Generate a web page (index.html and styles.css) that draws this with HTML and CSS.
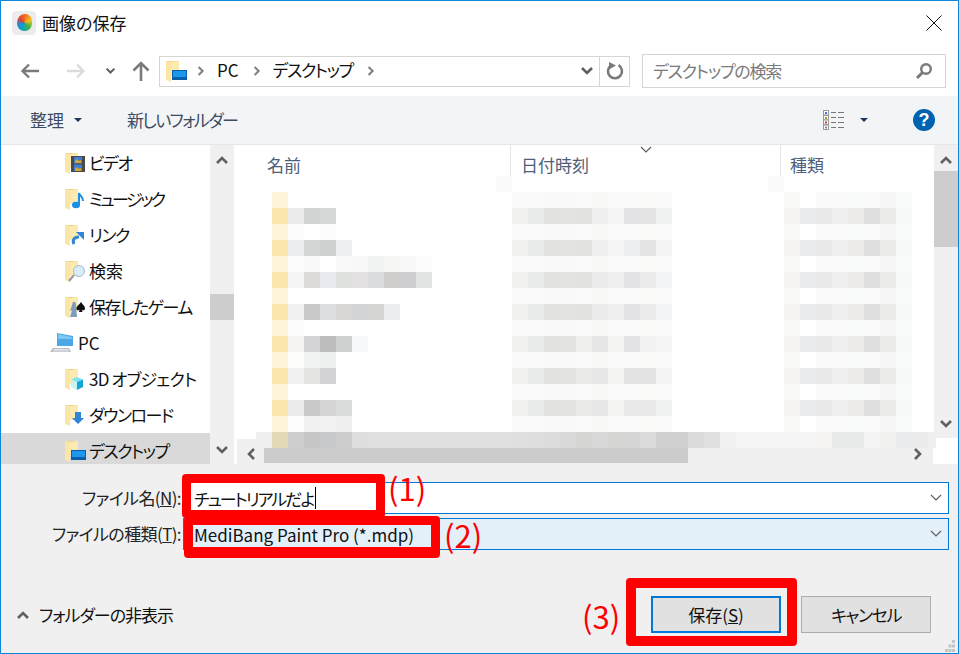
FILE: index.html
```html
<!doctype html>
<html lang="ja">
<head>
  <meta charset="utf8">
  <title>画像の保存</title>
  <link rel="stylesheet" href="styles.css">
</head>
<body>
  <!-- shared icon parts -->
  <svg class="defs" aria-hidden="true">
    <symbol id="folder" viewBox="0 0 22 24">
      <polygon points="0,2 13,2 13,17 0,17" fill="#f3cf7c"/>
      <polygon points="0,2 5,3 5,23 0,21" fill="#fbe6a6"/>
      <polygon points="5,3 13,2 13,17 5,17" fill="#fdeab0"/>
    </symbol>
    <symbol id="desktop" viewBox="0 0 22 24">
      <rect x="6.5" y="11.5" width="14" height="9" fill="#1f96ee" stroke="#0b5ea8"/>
      <rect x="7" y="18" width="13" height="2" fill="#0b5ea8"/>
    </symbol>
    <symbol id="chev-up" viewBox="0 0 14 10">
      <polyline points="2,8 7,3 12,8" fill="none" stroke="#606060" stroke-width="2.6"/>
    </symbol>
    <symbol id="chev-down" viewBox="0 0 14 10">
      <polyline points="2,2 7,7 12,2" fill="none" stroke="#606060" stroke-width="2.6"/>
    </symbol>
    <symbol id="chev-right" viewBox="0 0 10 14">
      <polyline points="2,2 7,7 2,12" fill="none" stroke="#808080" stroke-width="2.6"/>
    </symbol>
    <symbol id="thin-down" viewBox="0 0 12 8">
      <polyline points="1,1 6,6 11,1" fill="none" stroke="#5a5a5a" stroke-width="1.1"/>
    </symbol>
  </svg>

  <div class="window">
    <div class="titlebar">
      <span class="logo"><span class="logo-ball"></span></span>
      <span class="title">画像の保存</span>
      <svg class="close" width="16" height="16" viewBox="0 0 16 16">
        <path d="M.5.5l15 15M15.500.5l-15 15" stroke="#111" fill="none"/>
      </svg>
    </div>

    <div class="navbar">
      <svg class="nav-back" width="20" height="16" viewBox="0 0 20 16">
        <path d="M19 8H3M9 1.500L2.500 8 9 14.500" stroke="#7a7a7a" stroke-width="2.4" fill="none"/>
      </svg>
      <svg class="nav-forward" width="20" height="16" viewBox="0 0 20 16">
        <path d="M1 8h16M11 1.500L17.500 8 11 14.500" stroke="#dcdcdc" stroke-width="2.4" fill="none"/>
      </svg>
      <svg class="nav-recent" width="11" height="8"><use href="#chev-down"/></svg>
      <svg class="nav-up" width="18" height="20" viewBox="0 0 18 20">
        <path d="M9 20V3M1.500 9.500L9 2l7.500 7.500" stroke="#7a7a7a" stroke-width="2.6" fill="none"/>
      </svg>

      <div class="address">
        <svg class="addr-icon" width="22" height="24"><use href="#folder"/><use href="#desktop"/></svg>
        <svg class="crumb-sep" width="8" height="12"><use href="#chev-right"/></svg>
        <span class="crumb">PC</span>
        <svg class="crumb-sep" width="8" height="12"><use href="#chev-right"/></svg>
        <span class="crumb crumb-kana">デスクトップ</span>
        <svg class="crumb-sep" width="8" height="12"><use href="#chev-right"/></svg>
        <svg class="addr-drop" width="14" height="10"><use href="#chev-down"/></svg>
        <span class="addr-refresh">
          <svg width="18" height="18" viewBox="0 0 18 18">
            <path d="M12.500 3.200A7 7 0 1 1 5 3.500" stroke="#7a7a7a" stroke-width="2.6" fill="none"/>
            <polygon points="3,0 10,3.500 3,7.500" fill="#7a7a7a"/>
          </svg>
        </span>
      </div>

      <div class="search">
        <span class="search-hint">デスクトップの検索</span>
        <svg width="18" height="18" viewBox="0 0 18 18">
          <circle cx="11" cy="7" r="4.800" stroke="#7a7a7a" stroke-width="2.400" fill="none"/>
          <path d="M7.500 10.500L2 16" stroke="#7a7a7a" stroke-width="3"/>
        </svg>
      </div>
    </div>

    <div class="toolbar">
      <span class="tool">整理</span>
      <span class="tool-arrow"></span>
      <span class="tool tool-new">新しいフォルダー</span>
      <svg class="view-icon" width="22" height="20" viewBox="0 0 22 20">
        <g fill="#fff" stroke="#9a9a9a">
          <rect x=".5" y=".5" width="5" height="4.500"/>
          <rect x=".5" y="5.500" width="5" height="4.500"/>
          <rect x=".5" y="10" width="5" height="4.500"/>
          <rect x=".5" y="15" width="5" height="4.500"/>
        </g>
        <rect x="2" y="2" width="2" height="2" fill="#3b7bd0"/>
        <rect x="2" y="7" width="2" height="2" fill="#9a9a30"/>
        <rect x="2" y="11.500" width="2" height="2" fill="#c8402a"/>
        <rect x="2" y="16.500" width="2" height="2" fill="#888"/>
        <path d="M8 2.500h5M15 2.500h6M8 7.500h5M15 7.500h6M8 12.500h5M15 12.500h6M8 17.500h5M15 17.500h6" stroke="#777"/>
      </svg>
      <span class="tool-arrow view-arrow"></span>
      <span class="help">?</span>
    </div>

    <div class="main">
      <div class="tree">
        <ul class="tree-list">
          <li class="tree-row">
            <svg class="tree-icon" width="22" height="24" viewBox="0 0 22 24">
              <use href="#folder"/>
              <rect x="6" y="5" width="14" height="16" fill="#4a4a4a"/>
              <rect x="9" y="6" width="8" height="6.500" fill="#3f7fd2"/>
              <rect x="9" y="13.500" width="8" height="6.500" fill="#3f7fd2"/>
              <path d="M10 10l2-2 2 2 2-1v3h-6zM10 18l2-2 2 2 2-1v3h-6z" fill="#d9a62e"/>
            </svg>
            <span>ビデオ</span>
          </li>
          <li class="tree-row">
            <svg class="tree-icon" width="22" height="24" viewBox="0 0 22 24">
              <use href="#folder"/>
              <ellipse cx="11" cy="18" rx="4" ry="3.200" fill="#1b8fe6"/>
              <path d="M14 18V6c1 3 4 4 4 8" stroke="#1b8fe6" stroke-width="2" fill="none"/>
            </svg>
            <span class="tight">ミュージック</span>
          </li>
          <li class="tree-row">
            <svg class="tree-icon" width="22" height="24" viewBox="0 0 22 24">
              <use href="#folder"/>
              <path d="M9 21c-2-4 0-7 5-7" stroke="#2f86d6" stroke-width="3" fill="none"/>
              <polygon points="11,9 19,9 19,17" fill="#2f86d6"/>
            </svg>
            <span>リンク</span>
          </li>
          <li class="tree-row">
            <svg class="tree-icon" width="22" height="24" viewBox="0 0 22 24">
              <use href="#folder"/>
              <path d="M9 16l-5 6" stroke="#9a9a9a" stroke-width="2"/>
              <circle cx="14" cy="12" r="5.500" fill="#d8edf8" stroke="#a6bccb"/>
            </svg>
            <span class="loose">検索</span>
          </li>
          <li class="tree-row">
            <svg class="tree-icon" width="22" height="24" viewBox="0 0 22 24">
              <use href="#folder"/>
              <path d="M8 7c2-1 3 1 3 3l1 12H5l2-7-2 1z" fill="#7f9dbb"/>
              <path d="M16 7c2 3 4 4 4 6.500 0 2-2.500 2.500-3.300 1l.8 2.500h-3.600l.8-2.500c-.8 1.500-3.300 1-3.300-1C11.500 11 14 10 16 7z" fill="#111"/>
            </svg>
            <span>保存したゲーム</span>
          </li>
          <li class="tree-row tree-pc">
            <svg class="tree-icon" width="24" height="24" viewBox="0 0 24 24">
              <polygon points="7,2 23,5 23,15 7,15" fill="#4da6e6"/>
              <polygon points="8,3 22,6 22,8 8,8" fill="#7cc6f2"/>
              <polygon points="3,17 19,17 21,21 0,21" fill="#b9bec4"/>
              <path d="M4 18.500h14M3 20h16" stroke="#e4e6e8"/>
            </svg>
            <span class="loose">PC</span>
          </li>
          <li class="tree-row">
            <svg class="tree-icon" width="22" height="24" viewBox="0 0 22 24">
              <use href="#folder"/>
              <polygon points="12,10 18,12.500 12,15 6,12.500" fill="#7de3f0"/>
              <polygon points="6,12.500 12,15 12,23 6,20" fill="#c9f3ee"/>
              <polygon points="18,12.500 12,15 12,23 18,20" fill="#13a5d8"/>
            </svg>
            <span class="mild">3D オブジェクト</span>
          </li>
          <li class="tree-row">
            <svg class="tree-icon" width="22" height="24" viewBox="0 0 22 24">
              <use href="#folder"/>
              <polygon points="10,9 16,9 16,15 19,15 13,21 7,15 10,15" fill="#2f86d6"/>
            </svg>
            <span>ダウンロード</span>
          </li>
          <li class="tree-row is-selected">
            <svg class="tree-icon" width="22" height="24"><use href="#folder"/><use href="#desktop"/></svg>
            <span>デスクトップ</span>
          </li>
        </ul>
        <div class="vscroll">
          <svg width="14" height="10"><use href="#chev-up"/></svg>
          <span class="tree-thumb"></span>
          <svg width="14" height="10"><use href="#chev-down"/></svg>
        </div>
      </div>

      <div class="files">
        <div class="files-body">
          <div class="files-view">
            <div class="head">
              <span class="col col-name">名前</span>
              <span class="col col-date">日付時刻</span>
              <span class="col col-type">種類</span>
              <svg class="sort-mark" width="12" height="8"><use href="#thin-down"/></svg>
            </div>
          </div>
          <div class="vscroll files-scroll">
            <svg width="14" height="10"><use href="#chev-up"/></svg>
            <span class="files-thumb"></span>
            <svg width="14" height="10"><use href="#chev-down"/></svg>
          </div>
        </div>
        <div class="hscroll">
          <svg class="hs-left" width="10" height="14" viewBox="0 0 10 14">
            <polyline points="8,2 3,7 8,12" fill="none" stroke="#606060" stroke-width="2.600"/>
          </svg>
          <span class="hs-thumb"></span>
          <svg class="hs-right" width="10" height="14" viewBox="0 0 10 14">
            <polyline points="2,2 7,7 2,12" fill="none" stroke="#606060" stroke-width="2.600"/>
          </svg>
          <span class="hs-corner"></span>
        </div>
      </div>
    </div>

    <div class="footer">
      <div class="fields">
        <label class="field-label">ファイル名(<u>N</u>):</label>
        <div class="field"><span class="field-name">チュートリアルだよ</span><i class="caret"></i><svg class="field-drop" width="12" height="8"><use href="#thin-down"/></svg></div>
        <label class="field-label">ファイルの種類(<u>T</u>):</label>
        <div class="field field-type"><span>MediBang Paint Pro (*.mdp)</span><svg class="field-drop" width="12" height="8"><use href="#thin-down"/></svg></div>
      </div>
      <div class="actions">
        <span class="collapse">
          <svg width="14" height="10"><use href="#chev-up"/></svg>
          <span class="collapse-text">フォルダーの非表示</span>
        </span>
        <button class="btn btn-save">保存(<u>S</u>)</button>
        <button class="btn btn-cancel">キャンセル</button>
      </div>
    </div>

    <!-- red callouts over the dialog -->
    <div class="mark mark-1"></div>
    <div class="mark mark-2"></div>
    <div class="mark mark-3"></div>
    <span class="mark-num num-1">(1)</span>
    <span class="mark-num num-2">(2)</span>
    <span class="mark-num num-3">(3)</span>

    <!-- pixelated file names -->
    <svg class="mosaic" id="mosaic" width="680" height="272" viewBox="256 176 680 272"></svg>

    <svg class="grip" width="11" height="12" viewBox="0 0 11 12">
      <path d="M7 0h3v3H7zM3.500 4.500h3v3h-3zM7 4.500h3v3H7zM0 9h3v3H0zM3.500 9h3v3h-3zM7 9h3v3H7z" fill="#c4c4c4"/>
    </svg>
  </div>

  <script src="mosaic.js"></script>
</body>
</html>
```

FILE: styles.css
```css
html, body {
  width: 100%;
  height: 100%;
  overflow: hidden;
  margin: 0px;
  padding: 0px;
}
body {
  font-family: "Noto Sans CJK JP", "Noto Sans", sans-serif;
  font-size: 17px;
  font-feature-settings: "palt";
  color: #111;
}
.defs {
  position: absolute;
  width: 0;
  height: 0;
}
svg {
  display: block;
  flex: none;
}

.window {
  position: relative;
  box-sizing: border-box;
  display: flex;
  flex-direction: column;
  width: 959px;
  height: 654px;
  border: 1px solid #0f86dc;
  background: #fff;
  overflow: hidden;
}

/* title bar */
.titlebar {
  display: flex;
  align-items: center;
  height: 45px;
  padding: 0 16px 2px 11px;
  box-sizing: border-box;
  flex: none;
}
.logo {
  display: flex;
  align-items: center;
  justify-content: center;
  width: 24px;
  height: 24px;
  border-radius: 4px;
  background: #ececec;
}
.logo-ball {
  width: 15px;
  height: 17px;
  border-radius: 55% 50% 50% 50% / 65% 50% 50% 50%;
  background: conic-gradient(#f06a28 0deg, #f2c21e 70deg, #3cb44a 135deg, #14a4b8 195deg, #1f8be0 250deg, #e8402a 310deg, #f06a28 360deg);
}
.title {
  margin-left: 6px;
}
.close {
  margin-left: auto;
}

/* back / forward / address / search */
.navbar {
  display: flex;
  align-items: center;
  height: 50px;
  padding: 0 12px 0 19px;
  box-sizing: border-box;
  flex: none;
}
.nav-forward {
  margin-left: 26px;
}
.nav-recent {
  margin-left: 19px;
}
.nav-up {
  margin: 0 9px 0 16px;
}
.address {
  display: flex;
  align-items: center;
  box-sizing: border-box;
  width: 471px;
  height: 31px;
  border: 1px solid #d5d5d5;
  padding-left: 6px;
}
.addr-icon {
  margin-right: 9px;
}
.crumb {
  margin: -3px 14px 0 12px;
}
.crumb-kana {
  margin-left: 12px;
  letter-spacing: -1.4px;
}
.addr-drop {
  margin-left: auto;
  margin-right: 5px;
}
.addr-refresh {
  display: flex;
  align-items: center;
  justify-content: center;
  width: 29px;
  height: 100%;
  border-left: 1px solid #d5d5d5;
}
.search {
  display: flex;
  align-items: center;
  justify-content: space-between;
  box-sizing: border-box;
  width: 304px;
  height: 34px;
  margin-left: 12px;
  padding: 0 12px 0 10px;
  border: 1px solid #d5d5d5;
}
.search-hint {
  margin-top: -2px;
  color: #7a7a7a;
  letter-spacing: -1.2px;
}

/* command bar */
.toolbar {
  display: flex;
  align-items: center;
  height: 49px;
  padding: 0 23px 0 29px;
  box-sizing: border-box;
  background: #f3f4f6;
  border-bottom: 1px solid #e6e6e6;
  flex: none;
}
.tool {
  margin-top: -2px;
  color: #3c4b5f;
}
.tool-arrow {
  width: 0;
  height: 0;
  margin-left: 10px;
  border-style: solid;
  border-width: 4px 4px 0;
  border-color: #1e395b transparent transparent;
}
.tool-new {
  margin-left: 45px;
  letter-spacing: -1.6px;
}
.view-icon {
  margin-left: auto;
}
.view-arrow {
  margin: 0 45px 0 15px;
}
.help {
  display: block;
  width: 22px;
  height: 22px;
  border-radius: 50%;
  background: #0063b1;
  color: #fff;
  font: bold 18px/22px "Liberation Sans", sans-serif;
  text-align: center;
}

/* navigation pane and file list */
.main {
  display: flex;
  height: 319px;
  flex: none;
  overflow: hidden;
}
.tree {
  display: flex;
  width: 233px;
  flex: none;
}
.tree-list {
  list-style: none;
  margin: 0;
  padding: 0;
  width: 209px;
}
.tree-row {
  display: flex;
  align-items: center;
  gap: 2px;
  height: 36px;
  padding-left: 64px;
  box-sizing: border-box;
  white-space: pre;
  line-height: 32px;
  letter-spacing: -1.5px;
}
.tree-row .tight {
  letter-spacing: -2.6px;
}
.tree-row .mild {
  letter-spacing: -.8px;
}
.tree-row .loose {
  letter-spacing: 0;
}
.tree-pc {
  padding-left: 49px;
  gap: 4px;
}
.is-selected {
  background: #d9d9d9;
}
.vscroll {
  position: relative;
  display: flex;
  flex-direction: column;
  align-items: center;
  justify-content: space-between;
  box-sizing: border-box;
  width: 24px;
  padding: 10px 0 9px;
  background: #f0f0f0;
}
.tree-thumb {
  position: absolute;
  left: 0;
  top: 149px;
  width: 24px;
  height: 26px;
  background: #cdcdcd;
}
.files {
  display: flex;
  flex-direction: column;
  flex: 1;
  margin-left: 3px;
  min-width: 0;
}
.files-body {
  display: flex;
  flex: 1;
  min-height: 0;
}
.files-view {
  flex: 1;
}
.head {
  position: relative;
  display: flex;
  height: 31px;
  color: #4c607a;
}
.col {
  box-sizing: border-box;
  padding-top: 8px;
  line-height: 23px;
}
.col-name {
  width: 273px;
  padding-left: 30px;
}
.col-date {
  width: 270px;
  padding-left: 10px;
  border-left: 1px solid #e5e5e5;
}
.col-type {
  flex: 1;
  padding-left: 9px;
  border-left: 1px solid #e5e5e5;
}
.sort-mark {
  position: absolute;
  left: 403px;
  top: 1px;
}
.files-scroll {
  height: 293px;
}
.files-thumb {
  position: absolute;
  left: 0;
  top: 26px;
  width: 24px;
  height: 76px;
  background: #cdcdcd;
}
.hscroll {
  position: relative;
  display: flex;
  align-items: flex-end;
  height: 25px;
  background: #f0f0f0;
  flex: none;
}
.hs-left {
  margin: 0 0 3px 9px;
}
.hs-thumb {
  width: 424px;
  height: 15px;
  margin: 0 0 1px 8px;
  background: #cbcbcb;
}
.hs-right {
  margin: 0 0 3px auto;
}
.hs-corner {
  width: 25px;
  height: 25px;
  margin-left: 10px;
  background: #fff;
}

/* file name fields and buttons */
.footer {
  display: flex;
  flex-direction: column;
  flex: 1;
  background: #f0f0f0;
}
.fields {
  display: grid;
  grid-template-columns: 182px 1fr;
  row-gap: 4px;
  padding: 18px 9px 0 0;
}
.field-label {
  padding-right: 2px;
  text-align: right;
  line-height: 32px;
  color: #222;
  letter-spacing: -.6px;
}
.field {
  display: flex;
  align-items: center;
  height: 32px;
  box-sizing: border-box;
  padding: 0 6px 0 10px;
  border: 1px solid #0078d7;
  background: #fff;
}
.field-name {
  letter-spacing: -2px;
}
.field-type {
  background: #e3f0fa;
}
.caret {
  width: 1px;
  height: 22px;
  margin-left: 2px;
  background: #000;
}
.field-drop {
  margin-left: auto;
}
.actions {
  display: flex;
  align-items: center;
  gap: 20px;
  margin-top: 46px;
  padding: 0 27px 0 15px;
}
.collapse {
  display: flex;
  align-items: center;
  gap: 9px;
  margin-right: auto;
}
.collapse-text {
  letter-spacing: -1px;
}
.btn {
  width: 130px;
  height: 37px;
  box-sizing: border-box;
  padding: 0;
  border: 1px solid #adadad;
  background: #e1e1e1;
  color: #111;
  font: inherit;
}
.btn-save {
  border: 2px solid #0078d7;
}
.btn-cancel {
  letter-spacing: -1.4px;
}

/* callouts */
.mark {
  position: absolute;
  box-sizing: border-box;
  border: 9px solid #f00;
  border-radius: 4px;
}
.mark-1 {
  left: 181px;
  top: 473px;
  width: 203px;
  height: 44px;
  border-top-width: 9px;
  border-bottom-width: 8px;
}
.mark-2 {
  left: 183px;
  top: 515px;
  width: 256px;
  height: 42px;
  border-top-width: 9px;
  border-bottom-width: 11px;
}
.mark-3 {
  left: 625px;
  top: 577px;
  width: 171px;
  height: 68px;
  border-width: 10px;
}
.mark-num {
  position: absolute;
  color: #f00;
  font-size: 31px;
  line-height: 40px;
}
.num-1 {
  left: 387px;
  top: 467px;
}
.num-2 {
  left: 443px;
  top: 514px;
}
.num-3 {
  left: 581px;
  top: 595px;
}

.mosaic {
  position: absolute;
  left: 255px;
  top: 175px;
}
.grip {
  position: absolute;
  right: 2px;
  bottom: 1px;
}
```

FILE: mosaic.js
```js
// draws the pixelated name / date / type columns, one 16px block at a time
(function() {
  'use strict';
  var svg = document.getElementById('mosaic');
  var SIZE = 16;
  var Y = '#fbe7ae', LY = '#fdf3d9';

  function row(x, y, colors) {
    colors.forEach(function(c, i) {
      var r = document.createElementNS('http://www.w3.org/2000/svg', 'rect');
      r.setAttribute('x', x + i * SIZE);
      r.setAttribute('y', y);
      r.setAttribute('width', SIZE);
      r.setAttribute('height', SIZE);
      r.setAttribute('fill', c);
      svg.appendChild(r);
    });
  }

  // name column, top to bottom
  var names = [
    [LY],
    [Y, '#ebebeb', '#d2d4d3', '#d6d8d7'],
    [LY, '#fcfcfc', '#ffffff', '#fcfcfc'],
    [Y, '#ecedee', '#d5d7d6', '#cfd1d0', '#eeeff1'],
    [LY, '#fcfcfc', '#f9f9f9', '#ffffff', '#f9f9f9', '#f8f8f8', '#f1f3f3', '#f7f7f5', '#f8f8f8', '#fcfcfc'],
    [Y, '#f5f5f5', '#dcdbda', '#e7ebef', '#e0e2de', '#e3e1e2', '#d9dddf', '#d0cfce', '#cfcfd2', '#e2e4e3'],
    [LY],
    [Y, '#f1f1f2', '#c9c9ca', '#dcdde0', '#d9d6d4', '#d2d5d8', '#d5d5d3', '#ecedf0'],
    [LY, '#fcfcfc'],
    [Y, '#f4f3f1', '#d4d4d7', '#bcbcbc', '#cfd1d0', '#f7f8fa'],
    [LY, '#fdfdfc', '#f1f2f2', '#eff1f1'],
    [Y, '#f1f1f2', '#e5e5e3', '#d2d2d4'],
    [LY],
    [Y, '#edecec', '#c9c9c9', '#d5d5d5', '#dadcdb'],
    [LY, '#fdfdfd', '#f1f1f1', '#f2f2f2', '#efefef']
  ];
  names.forEach(function(colors, i) {
    row(272, 192 + i * SIZE, colors);
  });

  // date column: faint rows alternate with stronger ones
  var faintDate = ['#fafafa', '#fafafa', '#f9f9f9', '#f9f9f9', '#fafafa', '#f8f8f6', '#fafafa', '#fafafa', '#fafaf8', '#fbfbfb'];
  var dates = [
    ['#e2e2df', '#f0f0f0', '#f5f5f5', '#e3e3e6', '#e4e4e4', '#f0f2f1'],
    ['#e2e2df', '#f0f0f0', '#f5f5f5', '#edeef0', '#e5e5e5', '#f4f4f4'],
    ['#e2e2df', '#ebebeb', '#f0f0f0', '#e3e3e6', '#ececec', '#f3f4f7'],
    ['#e2e2df', '#ebebeb', '#f0f0f0', '#e3e3e6', '#ececec', '#f3f4f7'],
    ['#efefec', '#e6e6e6', '#f3f3f1', '#e3e3e6', '#f2f2f3', '#f5f5f5'],
    ['#eaeae8', '#e7e7e7', '#f3f3f1', '#e3e3e3', '#e3e3e3', '#f4f4f4'],
    ['#eaeae8', '#e7e7e7', '#f3f3f1', '#e8e8e8', '#e8e8e8', '#f0f2f1']
  ];
  var faintType = ['#f9f9f8', '#ffffff', '#fafafa', '#fbfbfb', '#f9fbfa', '#fafafa', '#f7f7f7', '#fafcfb'];
  var strongType = ['#f5f3f1', '#e9eded', '#e8e8e8', '#f0f0f0', '#ecebe9', '#dfdfdf', '#ebebe9', '#f7f9f8'];

  dates.forEach(function(tail, i) {
    var y = 192 + i * SIZE * 2;
    row(512, y, faintDate);
    row(512, y + SIZE, ['#f1f1f0', '#e9ebea', '#e2e2e1', '#e3e3e2'].concat(tail));
    row(784, y, faintType);
    row(784, y + SIZE, strongType);
  });
  row(512, 416, faintDate);
  row(784, 416, faintType);

  // faint leftovers of the header row
  row(496, 176, ['#fbfbfb']);
  row(768, 176, ['#fbfbfb']);

  // last row runs across the whole list and over the horizontal scroll bar
  row(256, 432, ['#efefef', '#e3d9b7', '#cfcfcf', '#c6c6c6', '#c6cacc', '#cdcdcd', '#dedede',
    '#e0e0e0', '#e0e0e0', '#e0e0e0', '#e0e0e0', '#e0e0e0', '#e0e0e0', '#e0e0e0', '#e0e0e0',
    '#e0e0e0', '#dfdfdf',
    '#dedede', '#dcdcdc', '#d9d9d9', '#d6d6d4', '#d8d8d8', '#d6d6d4', '#d6d6d6', '#dbdbdb',
    '#d0d0d0', '#d0d0d0', '#dbdbdb', '#e0e0e0', '#f1f1f1',
    '#f5f5f5', '#f5f5f5', '#f5f5f5', '#f5f5f5', '#f5f5f5',
    '#f5f3f1', '#e8eaea', '#e8eaea', '#f3f3f3', '#f1f1ef', '#e9ebed', '#ebebeb', '#eff0f2', '#f3f3f3']);
}());
```
